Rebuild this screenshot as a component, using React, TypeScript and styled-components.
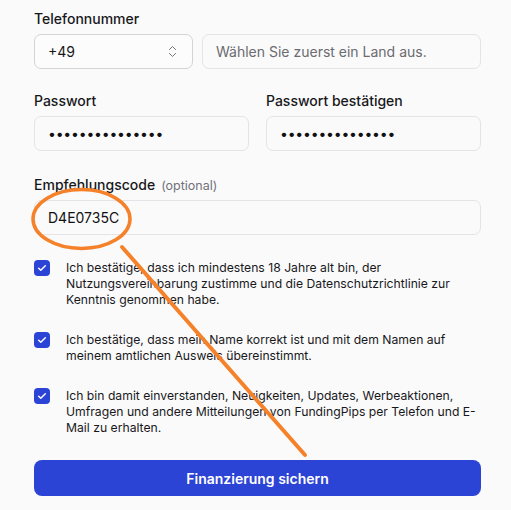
import styled, { createGlobalStyle } from "styled-components";
import { ChevronsUpDown } from "lucide-react";

const GlobalStyle = createGlobalStyle`
  html, body {
    margin: 0;
    padding: 0;
    background: #fafafa;
  }
  body {
    font-family: Inter, "Noto Sans", sans-serif;
    color: #18181b;
  }
`;

const Page = styled.div`
  position: relative;
  width: 511px;
  height: 510px;
  overflow: hidden;
  box-sizing: border-box;
  padding: 9px 30px 0 34px;
  display: flex;
  flex-direction: column;
`;

const Row = styled.div<{ $cols: string; $gap: number; $mb: number }>`
  display: grid;
  grid-template-columns: ${({ $cols }) => $cols};
  column-gap: ${({ $gap }) => $gap}px;
  margin-bottom: ${({ $mb }) => $mb}px;
`;

const Field = styled.div`
  display: flex;
  flex-direction: column;
  justify-content: flex-end;
`;

const Label = styled.label`
  display: block;
  height: 20px;
  line-height: 20px;
  font-size: 14px;
  font-weight: 500;
  color: #18181b;
  margin-bottom: 5px;
`;

const Optional = styled.span`
  font-size: 12.5px;
  font-weight: 400;
  color: #71717a;
  margin-left: 6px;
`;

const Input = styled.input<{ $dots?: boolean }>`
  box-sizing: border-box;
  width: 100%;
  height: 35px;
  padding: 0 13px;
  border: 1px solid #e4e4e7;
  border-radius: 7px;
  background: #fafafa;
  font-family: Inter, sans-serif;
  font-size: 14px;
  letter-spacing: ${({ $dots }) => ($dots ? "-0.2px" : "0")};
  color: #111113;
  outline: none;
  &::placeholder {
    color: #6b6b70;
  }
`;

const Select = styled.div`
  box-sizing: border-box;
  height: 35px;
  padding: 0 12px 0 13px;
  border: 1px solid #d4d4d8;
  border-radius: 7px;
  background: #fcfcfc;
  display: flex;
  align-items: center;
  justify-content: space-between;
  font-size: 14px;
  color: #18181b;
  svg {
    color: #6b6b70;
  }
`;

const Checks = styled.div`
  display: flex;
  flex-direction: column;
  gap: 24px;
  margin-bottom: 24px;
`;

const CheckRow = styled.label`
  display: flex;
  gap: 16px;
  align-items: flex-start;
`;

const Box = styled.span`
  flex: none;
  width: 16px;
  height: 16px;
  border-radius: 4px;
  background: #2c44d6;
  display: flex;
  align-items: center;
  justify-content: center;
`;

const CheckText = styled.span`
  font-size: 12.2px;
  line-height: 16px;
  color: #18181b;
  max-width: 415px;
`;

const Submit = styled.button`
  height: 36px;
  width: 100%;
  border: none;
  border-radius: 8px;
  background: #2c44d6;
  color: #fff;
  font-family: Inter, sans-serif;
  font-size: 14px;
  font-weight: 600;
`;

const Annotation = styled.svg`
  position: absolute;
  left: 0;
  top: 0;
  pointer-events: none;
`;

const Check = () => (
  <svg width="10" height="10" viewBox="0 0 24 24" fill="none" stroke="#fff" strokeWidth="3.5" strokeLinecap="round" strokeLinejoin="round">
    <path d="M4 12.5l5 5L20 6.5" />
  </svg>
);

const consents = [
  "Ich bestätige, dass ich mindestens 18 Jahre alt bin, der Nutzungsvereinbarung zustimme und die Datenschutzrichtlinie zur Kenntnis genommen habe.",
  "Ich bestätige, dass mein Name korrekt ist und mit dem Namen auf meinem amtlichen Ausweis übereinstimmt.",
  "Ich bin damit einverstanden, Neuigkeiten, Updates, Werbeaktionen, Umfragen und andere Mitteilungen von FundingPips per Telefon und E-Mail zu erhalten.",
];

const App = () => {
  return (
    <>
      <GlobalStyle />
      <Page>
        <Row $cols="159px 1fr" $gap={9} $mb={22}>
          <Field>
            <Label>Telefonnummer</Label>
            <Select>
              +49
              <ChevronsUpDown size={15} strokeWidth={1.5} />
            </Select>
          </Field>
          <Field>
            <Input placeholder="Wählen Sie zuerst ein Land aus." />
          </Field>
        </Row>
        <Row $cols="1fr 1fr" $gap={17} $mb={24}>
          <Field>
            <Label>Passwort</Label>
            <Input $dots type="password" defaultValue="abcdefghijklmno" />
          </Field>
          <Field>
            <Label>Passwort bestätigen</Label>
            <Input $dots type="password" defaultValue="abcdefghijklmno" />
          </Field>
        </Row>
        <Row $cols="1fr" $gap={0} $mb={25}>
          <Field>
            <Label>
              Empfehlungscode<Optional>(optional)</Optional>
            </Label>
            <Input defaultValue="D4E0735C" />
          </Field>
        </Row>
        <Checks>
          {consents.map((text) => (
            <CheckRow key={text}>
              <Box>
                <Check />
              </Box>
              <CheckText>{text}</CheckText>
            </CheckRow>
          ))}
        </Checks>
        <Submit type="button">Finanzierung sichern</Submit>
        <Annotation width="511" height="510" viewBox="0 0 511 510">
          <ellipse cx="81.5" cy="219" rx="48.5" ry="29.5" fill="none" stroke="#f5822a" strokeWidth="3.5" />
          <line x1="122" y1="247" x2="305" y2="455" stroke="#f5822a" strokeWidth="4" strokeLinecap="round" />
        </Annotation>
      </Page>
    </>
  );
};

export default App;
